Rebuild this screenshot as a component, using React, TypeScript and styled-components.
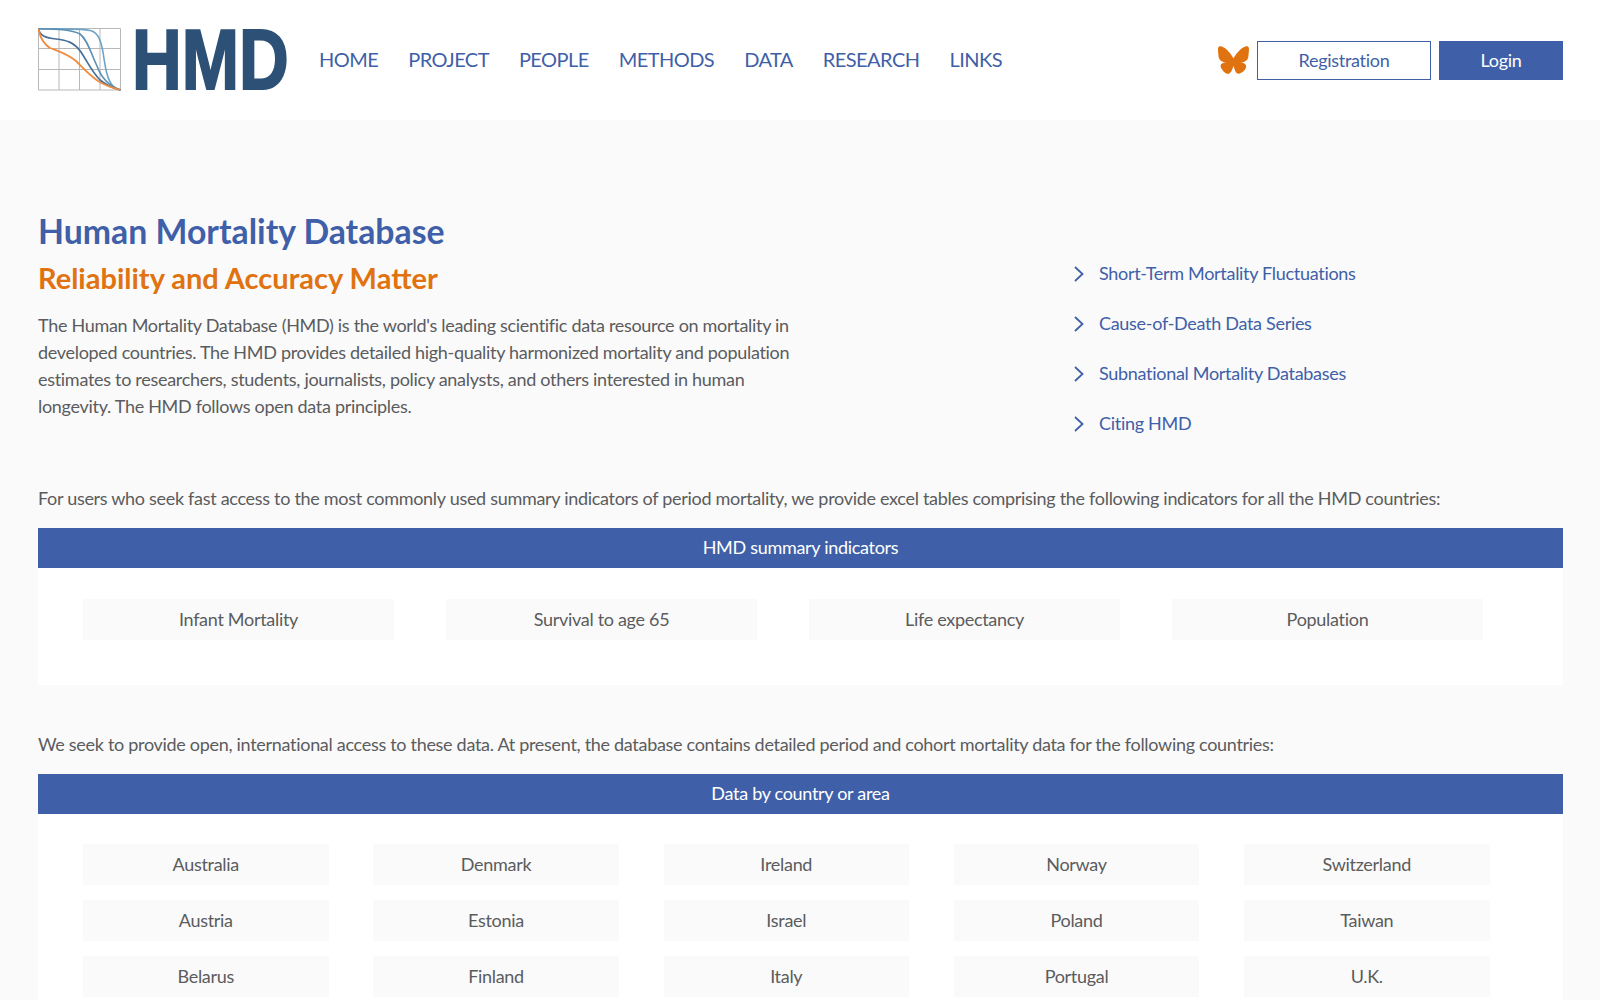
import React from 'react';
import styled, { createGlobalStyle } from 'styled-components';
import { FaBluesky } from 'react-icons/fa6';

const BLUE = '#3f5fa8';
const ORANGE = '#e0720f';
const TEXT = '#5a5c5e';

const GlobalStyle = createGlobalStyle`
  html, body {
    margin: 0;
    padding: 0;
    height: 1000px;
    overflow: hidden;
    background: #fafafa;
    color: ${TEXT};
    font-family: 'Lato', 'Liberation Sans', sans-serif;
    font-size: 18px;
    letter-spacing: -0.3px;
  }
`;

const Page = styled.div`
  width: 1600px;
  height: 1000px;
  overflow: hidden;
`;

const Header = styled.header`
  height: 120px;
  background: #fff;
  padding: 0 37px 0 38px;
  display: flex;
  align-items: center;
`;

const LogoLink = styled.a`
  display: flex;
  align-items: center;
  gap: 11px;
  width: 281px;
  margin-bottom: 1px;
`;

const LogoWord = styled.span`
  display: block;
  width: 152px;
  height: 62px;
  line-height: 62px;
  font-family: 'Liberation Sans', sans-serif;
  font-weight: 700;
  font-size: 85px;
  letter-spacing: 0;
  color: #2d5176;
  -webkit-text-stroke: 2px #2d5176;
  transform: scaleX(0.81);
  transform-origin: left center;
`;

const Nav = styled.nav`
  display: flex;
  gap: 30px;
  margin-bottom: 3px;
  font-size: 20px;
  letter-spacing: -0.55px;
  color: ${BLUE};
`;

const NavItem = styled.a`
  color: ${BLUE};
`;

const HeaderRight = styled.div`
  margin-left: auto;
  display: flex;
  align-items: center;
  gap: 8px;
`;

const ButterflyIcon = styled(FaBluesky)`
  width: 31px;
  height: 28px;
  color: ${ORANGE};
`;

const Button = styled.button<{ $filled?: boolean }>`
  height: 39px;
  width: ${(p) => (p.$filled ? '124px' : '174px')};
  border: 1px solid ${BLUE};
  background: ${(p) => (p.$filled ? BLUE : '#fff')};
  color: ${(p) => (p.$filled ? '#fff' : BLUE)};
  font: inherit;
  letter-spacing: inherit;
  padding: 0;
`;

const Main = styled.main`
  padding: 89px 37px 0 38px;
`;

const Hero = styled.section`
  display: flex;
  justify-content: space-between;
`;

const Intro = styled.div`
  width: 770px;
`;

const Title = styled.h1`
  margin: 0;
  font-size: 33.8px;
  line-height: 44px;
  font-weight: 700;
  letter-spacing: 0;
  color: ${BLUE};
`;

const Subtitle = styled.h2`
  margin: 5px 0 0;
  font-size: 29px;
  line-height: 40px;
  font-weight: 700;
  letter-spacing: 0;
  color: ${ORANGE};
`;

const Paragraph = styled.p`
  margin: 14px 0 0;
  line-height: 27px;
`;

const QuickLinks = styled.ul`
  list-style: none;
  margin: 51px 0 0;
  padding: 0;
  width: 489px;
  display: flex;
  flex-direction: column;
  gap: 25px;
`;

const QuickLink = styled.li`
  display: flex;
  align-items: center;
  gap: 15px;
  height: 25px;
  color: ${BLUE};
`;

const ChevronIcon = styled.svg`
  margin-top: 2px;
`;

const Lead = styled.p`
  margin: 0 0 16px;
  line-height: 27px;
`;

const Section = styled.section<{ $top: number }>`
  margin-top: ${(p) => p.$top}px;
`;

const Bar = styled.div`
  height: 40px;
  line-height: 39px;
  text-align: center;
  background: ${BLUE};
  color: #fff;
`;

const Panel = styled.div<{ $columns: number; $cell: number; $gap: number; $top: number }>`
  background: #fff;
  padding: ${(p) => p.$top}px 0 45px 45px;
  display: grid;
  grid-template-columns: repeat(${(p) => p.$columns}, ${(p) => p.$cell}px);
  column-gap: ${(p) => p.$gap}px;
  row-gap: 15px;
`;

const Cell = styled.div`
  height: 41px;
  line-height: 41px;
  text-align: center;
  background: #fafafa;
`;

const Chevron = () => (
  <ChevronIcon width="10" height="16" viewBox="0 0 10 16" fill="none" stroke={BLUE} strokeWidth="1.8">
    <path d="M1 1l7.5 7L1 15" />
  </ChevronIcon>
);

const Logo = () => (
  <svg width="83" height="63" viewBox="0 0 83 63" fill="none">
    <path
      d="M.5 .5H82.5V62H.5ZM21 .5V62M41.5 .5V62M62 .5V62M.5 20.5H82.5M.5 41.5H82.5"
      stroke="#b8b8b8"
      strokeWidth="1"
    />
    <path d="M.5 1C20 1 45 0 54 3C61 6 63 14 65 24C67 38 69 52 75 58C78 61 80 61.5 82.5 62" stroke="#6da3c7" strokeWidth="1.6" />
    <path d="M.5 .7C15 1 33 1 42 6C50 12 53 26 59 38C63 49 71 58 82.5 62" stroke="#5b8fb4" strokeWidth="1.6" />
    <path d="M.5 1C2 8 8 10 18 11C28 12 36 14 43 24C50 35 55 45 62 52C69 58 75 60 82.5 62" stroke="#47709a" strokeWidth="1.7" />
    <path d="M.5 1C2 10 6 16 12 20C20 23 28 25 38 33C45 40 50 46 60 53C68 58 75 60 82.5 62" stroke="#f08a3c" strokeWidth="1.8" />
  </svg>
);

const navItems = ['HOME', 'PROJECT', 'PEOPLE', 'METHODS', 'DATA', 'RESEARCH', 'LINKS'];
const links = ['Short-Term Mortality Fluctuations', 'Cause-of-Death Data Series', 'Subnational Mortality Databases', 'Citing HMD'];
const indicators = ['Infant Mortality', 'Survival to age 65', 'Life expectancy', 'Population'];
const countries = [
  'Australia', 'Denmark', 'Ireland', 'Norway', 'Switzerland',
  'Austria', 'Estonia', 'Israel', 'Poland', 'Taiwan',
  'Belarus', 'Finland', 'Italy', 'Portugal', 'U.K.',
];

export default function App() {
  return (
    <Page>
      <GlobalStyle />
      <Header>
        <LogoLink>
          <Logo />
          <LogoWord>HMD</LogoWord>
        </LogoLink>
        <Nav>
          {navItems.map((item) => (
            <NavItem key={item}>{item}</NavItem>
          ))}
        </Nav>
        <HeaderRight>
          <ButterflyIcon />
          <Button>Registration</Button>
          <Button $filled>Login</Button>
        </HeaderRight>
      </Header>
      <Main>
        <Hero>
          <Intro>
            <Title>Human Mortality Database</Title>
            <Subtitle>Reliability and Accuracy Matter</Subtitle>
            <Paragraph>
              The Human Mortality Database (HMD) is the world's leading scientific data resource on mortality in
              developed countries. The HMD provides detailed high-quality harmonized mortality and population
              estimates to researchers, students, journalists, policy analysts, and others interested in human
              longevity. The HMD follows open data principles.
            </Paragraph>
          </Intro>
          <QuickLinks>
            {links.map((link) => (
              <QuickLink key={link}>
                <Chevron />
                {link}
              </QuickLink>
            ))}
          </QuickLinks>
        </Hero>
        <Section $top={50}>
          <Lead>
            For users who seek fast access to the most commonly used summary indicators of period mortality, we provide
            excel tables comprising the following indicators for all the HMD countries:
          </Lead>
          <Bar>HMD summary indicators</Bar>
          <Panel $columns={4} $cell={311} $gap={52} $top={31}>
            {indicators.map((name) => (
              <Cell key={name}>{name}</Cell>
            ))}
          </Panel>
        </Section>
        <Section $top={46}>
          <Lead>
            We seek to provide open, international access to these data. At present, the database contains detailed
            period and cohort mortality data for the following countries:
          </Lead>
          <Bar>Data by country or area</Bar>
          <Panel $columns={5} $cell={245.5} $gap={44.75} $top={30}>
            {countries.map((name) => (
              <Cell key={name}>{name}</Cell>
            ))}
          </Panel>
        </Section>
      </Main>
    </Page>
  );
}
